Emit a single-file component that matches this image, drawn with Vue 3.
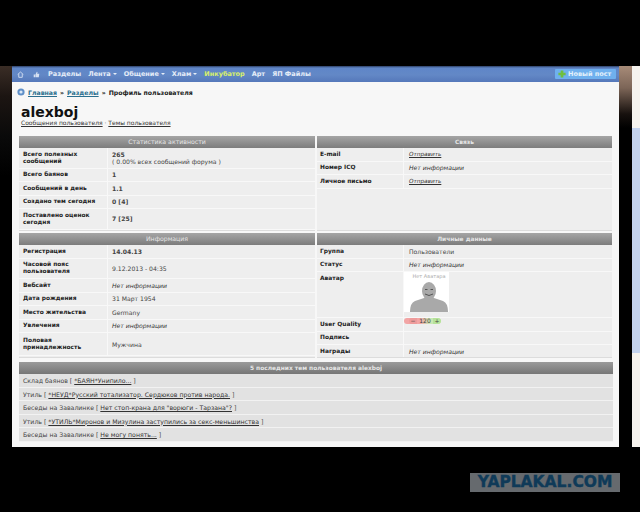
<template>
  <div class="screen">
    <div class="shot">
      <div class="edge-left"></div>
      <div class="page">
        <nav class="nav">
          <svg class="nav-icon" viewBox="0 0 10 10"><path d="M1 5 5 1.5 9 5M2.5 4.500V9h5V4.500" fill="none" stroke="#d5e0f2" stroke-width="1.3"/></svg>
          <svg class="nav-icon" viewBox="0 0 10 10"><path d="M1 5h2v4H1zM3.5 5 5.5 1l1 .5L6 4h3l-.7 5H3.5z" fill="#d5e0f2"/></svg>
          <a v-for="item in navItems" :key="item.label" :class="{ hot: item.hot }">{{ item.label }}<i v-if="item.menu" class="caret"></i></a>
          <span class="new-post">
            <svg viewBox="0 0 10 10"><path d="M3.300.5h3.400v2.800h2.800v3.400H6.700v2.800H3.300V6.700H.5V3.300h2.800z" fill="#6fbf3f"/></svg>
            Новый пост
          </span>
        </nav>

        <div class="content">
          <div class="crumbs">
            <svg viewBox="0 0 10 10"><circle cx="5" cy="5" r="4.500" fill="#5f8fc8"/><circle cx="5" cy="5" r="2" fill="#dbe8f6"/></svg>
            <a>Главная</a> <b>»</b> <a>Разделы</a> <b>»</b> <span>Профиль пользователя</span>
          </div>
          <h1>alexboj</h1>
          <div class="sublinks"><a>Сообщения пользователя</a> · <a>Темы пользователя</a></div>

          <div class="grid">
            <section v-for="block in blocks" :key="block.title" class="block" :class="block.cls">
              <h2>{{ block.title }}</h2>
              <div v-for="row in block.rows" :key="row.label" class="row" :class="row.h">
                <div class="label">{{ row.label }}</div>
                <div class="value" :class="row.type">
                  <template v-if="row.type === 'avatar'">
                    <div class="avatar">
                      <span>Нет Аватара</span>
                      <svg viewBox="0 0 40 30"><ellipse cx="20" cy="9" rx="7" ry="9" fill="#a9a9a9"/><path d="M16 7.500h2.500M21.500 7.500H24M16 12q4 3 8 0" stroke="#555" fill="none"/><path d="M1 30q0-9 5-11l9-3h10l9 3q5 2 5 11z" fill="#a9a9a9"/></svg>
                    </div>
                  </template>
                  <template v-else-if="row.type === 'rating'">
                    <span class="rating"><i class="minus">−</i><em>120</em><i class="plus">+</i></span>
                  </template>
                  <template v-else>
                    <span v-for="(line, i) in row.value" :key="i" class="line">{{ line }}</span>
                  </template>
                </div>
              </div>
            </section>
          </div>

          <section class="topics">
            <h2>5 последних тем пользователя alexboj</h2>
            <div v-for="topic in topics" :key="topic.title" class="topic">
              {{ topic.forum }} [ <a>{{ topic.title }}</a> ]
            </div>
          </section>
        </div>
      </div>
      <div class="edge-right"></div>
      <div class="scrollbar"><div class="thumb"></div></div>
    </div>
    <div class="watermark">YAPLAKAL.COM</div>
  </div>
</template>

<script setup>
const navItems = [
  { label: 'Разделы' },
  { label: 'Лента', menu: true },
  { label: 'Общение', menu: true },
  { label: 'Хлам', menu: true },
  { label: 'Инкубатор', hot: true },
  { label: 'Арт' },
  { label: 'ЯП Файлы' }
]

const noInfo = ['Нет информации']

const blocks = [
  {
    title: 'Статистика активности',
    cls: 'stats',
    rows: [
      { label: 'Всего полезных сообщений', value: ['265', '( 0.00% всех сообщений форума )'], type: 'first-bold', h: 'tall' },
      { label: 'Всего баянов', value: ['1'], type: 'bold' },
      { label: 'Сообщений в день', value: ['1.1'], type: 'bold' },
      { label: 'Создано тем сегодня', value: ['0 [4]'], type: 'bold' },
      { label: 'Поставлено оценок сегодня', value: ['7 [25]'], type: 'bold', h: 'tall' }
    ]
  },
  {
    title: 'Связь',
    cls: 'contact',
    rows: [
      { label: 'E-mail', value: ['Отправить'], type: 'link' },
      { label: 'Номер ICQ', value: noInfo, type: 'none' },
      { label: 'Личное письмо', value: ['Отправить'], type: 'link' }
    ]
  },
  {
    title: 'Информация',
    cls: 'info',
    rows: [
      { label: 'Регистрация', value: ['14.04.13'], type: 'bold' },
      { label: 'Часовой пояс пользователя', value: ['9.12.2013 - 04:35'], h: 'tall' },
      { label: 'Вебсайт', value: noInfo, type: 'none' },
      { label: 'Дата рождения', value: ['31 Март 1954'] },
      { label: 'Место жительства', value: ['Germany'] },
      { label: 'Увлечения', value: noInfo, type: 'none' },
      { label: 'Половая принадлежность', value: ['Мужчина'], h: 'taller' }
    ]
  },
  {
    title: 'Личные данные',
    cls: 'personal',
    rows: [
      { label: 'Группа', value: ['Пользователи'] },
      { label: 'Статус', value: noInfo, type: 'none' },
      { label: 'Аватар', type: 'avatar', h: 'top' },
      { label: 'User Quality', type: 'rating' },
      { label: 'Подпись', value: [''] },
      { label: 'Награды', value: noInfo, type: 'none' }
    ]
  }
]

const topics = [
  { forum: 'Склад баянов', title: '*БАЯН*Унипило...' },
  { forum: 'Утиль', title: '*НЕУД*Русский тотализатор. Сердюков против народа.' },
  { forum: 'Беседы на Завалинке', title: 'Нет стоп-крана для "ворюги - Тарзана"?' },
  { forum: 'Утиль', title: '*УТИЛЬ*Миронов и Мизулина заступились за секс-меньшинства' },
  { forum: 'Беседы на Завалинке', title: 'Не могу понять...' }
]
</script>

<style scoped>
.screen {
  width: 640px;
  height: 512px;
  background: #000;
  overflow: hidden;
  padding-top: 66px;
  box-sizing: border-box;
  font-family: "DejaVu Sans", sans-serif;
  font-size: 6.2px;
  color: #333;
  position: relative;
}
.shot {
  display: flex;
  height: 381px;
}
.edge-left {
  width: 12px;
  background: linear-gradient(#3a2d26 0, #1c1512 30px, #0a0a0a 70px, #000 110px);
}
.page {
  width: 607px;
  background: #f7f7f7;
  display: flex;
  flex-direction: column;
  overflow: hidden;
}
.edge-right {
  width: 13px;
  background: linear-gradient(#a78b78 0, #7c6557 22px, #17110e 48px, #000 62px);
}
.scrollbar {
  width: 8px;
  background: #f6f3ee;
  padding-top: 62px;
}
.thumb {
  height: 225px;
  background: #c4d3ee;
}
.nav {
  height: 16px;
  flex: none;
  display: flex;
  align-items: center;
  padding-left: 5px;
  gap: 7px;
  background: linear-gradient(#2d3f63 0, #5f86c8 2px, #6388c6 55%, #5578ba 100%);
  color: #e6edf8;
  font-size: 6.5px;
  font-weight: bold;
}
.nav-icon {
  width: 7px;
  height: 7px;
  margin-right: 1.5px;
}
.nav .hot {
  color: #d9f06a;
}
.caret {
  display: inline-block;
  margin-left: 2px;
  vertical-align: 1px;
  border: 2px solid transparent;
  border-top-color: #e6edf8;
  border-bottom: 0;
}
.new-post {
  margin-left: auto;
  margin-right: 3px;
  height: 10px;
  width: 61px;
  display: flex;
  align-items: center;
  gap: 2px;
  padding-left: 3px;
  box-sizing: border-box;
  background: #6fb0ee;
  border-radius: 1px;
  color: #e4f0fb;
}
.new-post svg {
  width: 8px;
  height: 8px;
}
.content {
  padding: 0 6px 0 7px;
}
.crumbs {
  margin: 4px 0 0 -2px;
  height: 12px;
  display: flex;
  align-items: center;
  gap: 3px;
  font-size: 6.2px;
  color: #222;
}
.crumbs svg {
  width: 8px;
  height: 8px;
}
.crumbs a {
  color: #2a6f8e;
  text-decoration: underline;
  font-weight: bold;
}
.crumbs span,
.crumbs b {
  font-weight: bold;
}
h1 {
  margin: 7px 0 0 2px;
  font-size: 14px;
  line-height: 14px;
  color: #111;
  font-weight: bold;
}
.sublinks {
  margin: 0 0 0 2px;
  height: 8px;
  line-height: 8px;
  font-size: 6px;
  color: #555;
}
.sublinks a {
  text-decoration: underline;
  color: #333;
}
.grid {
  margin-top: 9px;
  display: grid;
  grid-template-columns: 296px 295px;
  grid-template-rows: 95px 125px;
  gap: 2px;
}
.block {
  background: #eeeeee;
  border-bottom: 1px solid #dcdcdc;
  overflow: hidden;
  box-sizing: border-box;
}
h2 {
  margin: 0;
  height: 12px;
  line-height: 12px;
  background: linear-gradient(#a5a5a5, #7c7c7c);
  color: #e6e6e6;
  font-size: 6.2px;
  font-weight: normal;
  text-align: center;
}
.personal h2,
.contact h2,
.topics h2 {
  font-weight: bold;
  font-size: 5.9px;
}
.row {
  display: flex;
  height: 13.5px;
  border-bottom: 1px solid #f8f8f8;
  box-sizing: border-box;
}
.row.tall {
  height: 20.5px;
}
.row.taller {
  height: 23px;
}
.row.top {
  height: 46px;
}
.label {
  width: 89px;
  flex: none;
  padding: 0 2px 0 4px;
  box-sizing: border-box;
  border-right: 1px solid #f8f8f8;
  display: flex;
  align-items: center;
  font-weight: bold;
  font-size: 5.9px;
  line-height: 7px;
  color: #222;
}
.contact .label,
.personal .label {
  width: 87px;
  padding-left: 3px;
}
.row.top .label {
  align-items: flex-start;
  padding-top: 3px;
}
.value {
  padding-left: 4px;
  display: flex;
  flex-direction: column;
  justify-content: center;
  font-size: 6.1px;
  line-height: 7px;
  color: #444;
}
.contact .value,
.personal .value {
  padding-left: 5px;
}
.value.bold .line,
.value.first-bold .line:first-child {
  font-weight: bold;
}
.value.none {
  font-style: italic;
  color: #333;
}
.value.link {
  font-style: italic;
  font-size: 5.7px;
  text-decoration: underline;
  color: #333;
}
.avatar {
  width: 40px;
  height: 40px;
  background: #fff;
  display: flex;
  flex-direction: column;
  align-items: center;
  justify-content: space-between;
  font-size: 5px;
  line-height: 9px;
  color: #aaa;
}
.avatar svg {
  width: 40px;
  height: 30px;
}
.rating {
  display: flex;
  width: 32px;
  height: 6px;
  line-height: 6px;
  font-size: 6px;
  text-align: center;
  border-radius: 3px;
  overflow: hidden;
  background: linear-gradient(90deg, #f2a5a5 0 35%, #c9e8b4 65%);
}
.rating i {
  width: 8px;
  font-style: normal;
  font-size: 6px;
}
.rating .minus {
  background: #ee9b9b;
}
.rating .plus {
  background: #b6e29a;
}
.rating em {
  flex: 1;
  font-style: normal;
}
.topics {
  margin-top: 4px;
  background: #e2e2e2;
}
.topics h2 {
  height: 12px;
  line-height: 12px;
  background: linear-gradient(#9a9a9a, #767676);
}
.topic {
  height: 13.5px;
  line-height: 13px;
  box-sizing: border-box;
  padding-left: 4px;
  border-bottom: 1px solid #f2f2f2;
  font-size: 6.2px;
  color: #444;
}
.topic a {
  text-decoration: underline;
  color: #333;
}
.watermark {
  position: absolute;
  left: 470px;
  top: 473px;
  width: 150px;
  height: 19px;
  background: #666a6e;
  color: #0f3a58;
  font-family: "DejaVu Sans", sans-serif;
  font-weight: bold;
  font-size: 15.5px;
  line-height: 19px;
  text-align: center;
  -webkit-text-stroke: .4px #0f3a58;
}
</style>
